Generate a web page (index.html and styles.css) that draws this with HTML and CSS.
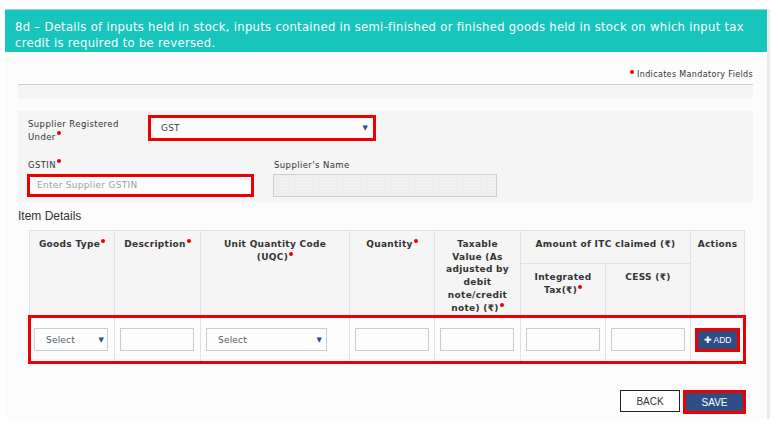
FILE: index.html
```html
<!DOCTYPE html>
<html>
<head>
<meta charset="utf-8">
<link rel="stylesheet" href="styles.css">
</head>
<body>
<div class="panel">
  <div class="panel-head">8d – Details of inputs held in stock, inputs contained in semi-finished or finished goods held in stock on which input tax credit is required to be reversed.</div>
  <div class="panel-body">
    <div class="mandatory"><span class="dot"></span> Indicates Mandatory Fields</div>
    <div class="band"></div>
    <div class="form-box">
      <div class="row1">
        <label class="lbl lbl-reg">Supplier Registered Under<span class="dot"></span></label>
        <div class="sel sel-reg red"><span>GST</span><span class="arrow">▼</span></div>
      </div>
      <div class="row2">
        <div class="field">
          <label class="lbl">GSTIN<span class="dot"></span></label>
          <div class="inp inp-gstin red">Enter Supplier GSTIN</div>
        </div>
        <div class="field field-name">
          <label class="lbl">Supplier's Name</label>
          <div class="inp inp-name"></div>
        </div>
      </div>
    </div>
    <div class="item-title">Item Details</div>
    <table class="items">
      <colgroup>
        <col style="width:85px"><col style="width:86px"><col style="width:149px"><col style="width:85px"><col style="width:86px"><col style="width:85px"><col style="width:85px"><col style="width:54px">
      </colgroup>
      <thead>
        <tr class="h1">
          <th rowspan="2">Goods Type<span class="dot"></span></th>
          <th rowspan="2">Description<span class="dot"></span></th>
          <th rowspan="2">Unit Quantity Code<br>(UQC)<span class="dot"></span></th>
          <th rowspan="2">Quantity<span class="dot"></span></th>
          <th rowspan="2">Taxable<br>Value (As<br>adjusted by<br>debit<br>note/credit<br>note) (₹)<span class="dot"></span></th>
          <th colspan="2" class="grp">Amount of ITC claimed (₹)</th>
          <th rowspan="2">Actions</th>
        </tr>
        <tr class="h2">
          <th>Integrated<br>Tax(₹)<span class="dot"></span></th>
          <th>CESS (₹)</th>
        </tr>
      </thead>
      <tbody>
        <tr>
          <td class="first"><div class="sel sel-small"><span>Select</span><span class="arrow">▼</span></div></td>
          <td><div class="box"></div></td>
          <td><div class="sel sel-uqc"><span>Select</span><span class="arrow">▼</span></div></td>
          <td><div class="box"></div></td>
          <td><div class="box"></div></td>
          <td><div class="box"></div></td>
          <td><div class="box"></div></td>
          <td class="last"><div class="add-wrap"><span class="btn-add">✚ ADD</span></div></td>
        </tr>
      </tbody>
    </table>
    <div class="actions">
      <span class="btn btn-back">BACK</span>
      <span class="btn btn-save">SAVE</span>
    </div>
  </div>
</div>
</body>
</html>
```
FILE: styles.css
```css
* { box-sizing: border-box; }
body {
  margin: 0;
  background: #ffffff;
  font-family: "DejaVu Sans", Verdana, sans-serif;
  color: #333;
}
.panel {
  margin: 9px 8px 0 5px;
  width: 765px;
  border-right: 3px solid #e9eae9;
  background: #fbfcfb;
  padding-bottom: 5px;
}
.panel-head {
  background: #17c5bd;
  border-top: 1px solid #8edcd8;
  color: #fbfffe;
  font-family: "DejaVu Sans", Verdana, sans-serif;
  font-size: 11.6px;
  letter-spacing: 0.3px;
  line-height: 16px;
  padding: 9px 10px 0 10px;
  height: 43px;
}
.panel-body {
  padding: 0 14px 0 13px;
}
.mandatory {
  text-align: right;
  font-size: 8px;
  letter-spacing: 0.35px;
  color: #333;
  height: 33px;
  padding-top: 18px;
  line-height: 10px;
  border-bottom: 1px solid #cccccc;
}
.dot {
  display: inline-block;
  width: 4px;
  height: 4px;
  border-radius: 50%;
  background: #ee0000;
  vertical-align: 5px;
  margin-left: 1px;
}
.mandatory .dot { vertical-align: 3px; }
.band {
  height: 14px;
  background: #f4f5f4;
  margin-bottom: 12px;
}
.form-box {
  background: #f4f5f4;
  height: 92px;
  padding: 4px 0 0 9px;
}
.row1 {
  display: flex;
  align-items: flex-start;
}
.lbl {
  display: block;
  font-size: 8.5px;
  letter-spacing: 0.4px;
  line-height: 13px;
  color: #333;
}
.lbl-reg {
  width: 121px;
  padding: 3px 0 0 1px;
}
.red { border: 3px solid #ee0000 !important; }
.sel {
  display: flex;
  align-items: center;
  justify-content: space-between;
  background: #fdfdfd;
  border: 1px solid #cccccc;
  font-size: 9px;
  letter-spacing: 0.2px;
  color: #555e6a;
}
.arrow {
  font-size: 7px;
  color: #2d4d85;
}
.sel-reg {
  width: 228px;
  height: 26px;
  padding: 0 5px 0 10px;
  color: #444;
}
.row2 {
  display: flex;
  gap: 19px;
  margin-top: 15px;
}
.field .lbl { padding-left: 1px; height: 14px; margin-bottom: 1px; }
.inp {
  height: 23px;
  border: 1px solid #cccccc;
  background: #fdfdfd;
  font-size: 9px;
  letter-spacing: 0.3px;
  color: #a0a0a0;
  line-height: 17px;
  padding-left: 7px;
}
.inp-gstin { width: 227px; }
.inp-name {
  width: 224px;
  background-color: #eeeeee;
  background-image: radial-gradient(#f8f8f8 0.6px, transparent 0.7px);
  background-size: 3px 3px;
  border-color: #cfcfcf;
}
.item-title {
  font-family: "Liberation Sans", Arial, sans-serif;
  font-size: 12px;
  color: #333;
  height: 27px;
  line-height: 26px;
}
.items {
  border-collapse: collapse;
  table-layout: fixed;
  width: 715px;
  margin-left: 10px;
}
.items th {
  background: #f4f5f4;
  border: 1px solid #dfe2df;
  font-size: 9px;
  letter-spacing: 0.3px;
  font-weight: bold;
  color: #333;
  line-height: 12.7px;
  vertical-align: top;
  padding: 7px 2px 0 2px;
  text-align: center;
}
.items th .dot { vertical-align: 4px; }
.items .h1 th.grp { height: 33px; }
.items .h2 th { height: 53px; padding-top: 7px; }
.items td {
  background: #fcfdfc;
  border: 1px solid #e0e3e0;
  border-top: 3px solid #ee0000;
  border-bottom: 3px solid #ee0000;
  height: 46px;
  padding: 0 5px;
  vertical-align: middle;
}
.items td.first { border-left: 3px solid #ee0000; padding-left: 3px; }
.items td.last { border-right: 3px solid #ee0000; padding: 0 2px 0 4px; }
.box {
  width: 74px;
  height: 23px;
  border: 1px solid #cccccc;
  background: #fdfdfd;
}
.sel-small {
  width: 74px;
  height: 23px;
  padding: 0 3px 0 11px;
}
.sel-uqc {
  width: 121px;
  height: 23px;
  padding: 0 4px 0 11px;
}
.add-wrap {
  width: 45px;
  height: 24px;
  border: 3px solid #ee0000;
  background: #2d4f86;
  display: flex;
  align-items: center;
  justify-content: center;
}
.btn-add {
  font-family: "Liberation Sans", Arial, sans-serif;
  font-size: 8.5px;
  color: #ffffff;
}
.actions {
  display: flex;
  justify-content: flex-end;
  gap: 3px;
  margin-top: 26px;
  padding-right: 7px;
}
.btn {
  font-family: "Liberation Sans", Arial, sans-serif;
  font-size: 10px;
  display: flex;
  align-items: center;
  justify-content: center;
}
.btn-back {
  width: 60px;
  height: 22px;
  border: 1px solid #1f1f2a;
  background: #ffffff;
  color: #333;
}
.btn-save {
  width: 63px;
  height: 24px;
  border: 3px solid #ee0000;
  background: #2d4f86;
  color: #ffffff;
}
```
